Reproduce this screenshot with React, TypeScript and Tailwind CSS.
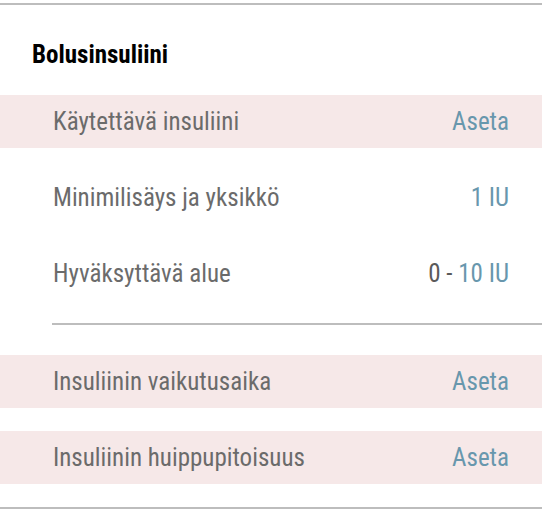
const rows = [
  { label: 'Käytettävä insuliini', value: 'Aseta', tinted: true },
  { label: 'Minimilisäys ja yksikkö', value: '1 IU', tinted: false },
];

function Row({ label, children, tinted }: { label: string; children: React.ReactNode; tinted?: boolean }) {
  return (
    <div
      className={`flex h-[53px] items-center justify-between pl-[53px] pr-[33px] text-[25px] leading-[30px] ${
        tinted ? 'bg-[#f6e8e8]' : ''
      }`}
    >
      <span className="text-[#6b6b6b]">{label}</span>
      <span className="text-[#6897ad]">{children}</span>
    </div>
  );
}

export default function App() {
  return (
    <div
      className="min-h-[517px] w-full bg-white pt-[3px]"
      style={{ fontFamily: '"Roboto Condensed", Roboto, sans-serif' }}
    >
      <div className="border-t-2 border-[#bdbdbd]">
        {/* Section heading */}
        <div className="pl-8 pt-[35px] pb-[25px]">
          <h2 className="text-[25px] font-bold leading-[30px] text-black">Bolusinsuliini</h2>
        </div>

        <div className="flex flex-col gap-[23px]">
          {rows.map((r) => (
            <Row key={r.label} label={r.label} tinted={r.tinted}>
              {r.value}
            </Row>
          ))}
          <Row label="Hyväksyttävä alue">
            <span className="text-[#5a5a5a]">0</span>
            <span className="text-[#5a5a5a]"> - </span>
            10 IU
          </Row>
        </div>

        <div className="mt-[23px] ml-[52px] border-t-2 border-[#bdbdbd]" />

        <div className="mt-[30px] flex flex-col gap-[23px] pb-[23px]">
          <Row label="Insuliinin vaikutusaika" tinted>
            Aseta
          </Row>
          <Row label="Insuliinin huippupitoisuus" tinted>
            Aseta
          </Row>
        </div>

        <div className="border-t-2 border-[#bdbdbd]" />
      </div>
    </div>
  );
}
